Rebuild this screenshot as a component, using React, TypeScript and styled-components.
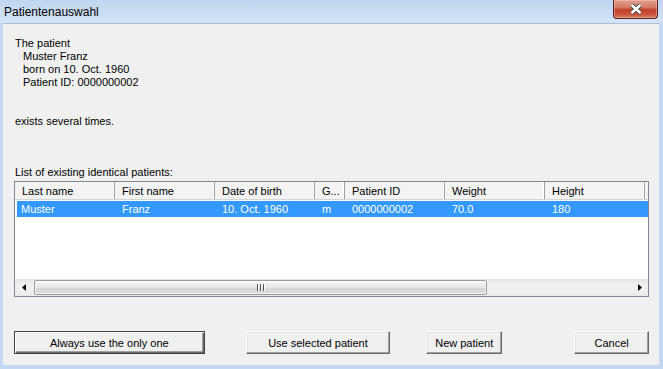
import styled, { createGlobalStyle } from "styled-components";

const GlobalStyle = createGlobalStyle`
  html, body {
    margin: 0;
    padding: 0;
  }
  body {
    background: #c4d9f1;
    font-family: "Liberation Sans", Arial, sans-serif;
    color: #000;
  }
`;

const Window = styled.div`
  width: 663px;
  height: 369px;
  display: flex;
  flex-direction: column;
  background: #c4d9f1;
  overflow: hidden;
`;

const TitleBar = styled.div`
  height: 23px;
  flex: none;
  display: flex;
  justify-content: space-between;
  align-items: flex-start;
  background: linear-gradient(to bottom, #c0d6f0, #d4e4f6);
`;

const Title = styled.span`
  font-size: 12px;
  line-height: 14px;
  padding: 5px 0 0 4px;
`;

const CloseButton = styled.div`
  width: 45px;
  height: 19px;
  margin-right: 5px;
  box-sizing: border-box;
  border: 1px solid #5b231e;
  border-top: none;
  border-radius: 0 0 4px 4px;
  background: linear-gradient(
    to bottom,
    #e1a091 0%,
    #d67a66 40%,
    #c2402b 55%,
    #cc5a44 85%,
    #d9806a 100%
  );
  box-shadow: inset 0 0 0 1px rgba(255, 200, 190, 0.45);
  display: flex;
  align-items: center;
  justify-content: center;
`;

const Client = styled.div`
  flex: 1;
  margin: 0 4px 4px 3px;
  box-sizing: border-box;
  background: #f0f0f0;
  border-top: 1px solid #aebfd6;
  padding: 13px 10px 0 11px;
  display: flex;
  flex-direction: column;
  font-size: 11px;
`;

const Line = styled.div<{ $indent?: boolean; $gap?: number }>`
  line-height: 13px;
  height: 13px;
  white-space: pre;
  padding-left: ${(p) => (p.$indent ? 9 : 1)}px;
  margin-top: ${(p) => p.$gap ?? 0}px;
`;

const ListBox = styled.div`
  margin-top: 2px;
  width: 635px;
  height: 116px;
  box-sizing: border-box;
  border: 1px solid #828790;
  background: #fff;
  display: flex;
  flex-direction: column;
  overflow: hidden;
`;

const HeaderRow = styled.div`
  display: flex;
  height: 18px;
  flex: none;
  background: #f3f3f3;
  border-bottom: 1px solid #d5d5d5;
  box-sizing: border-box;
`;

const HeaderCell = styled.div<{ $w: number }>`
  width: ${(p) => p.$w}px;
  flex: none;
  box-sizing: border-box;
  padding: 1px 0 0 7px;
  border-right: 1px solid #a0a0a0;
  box-shadow: inset -1px 0 0 #fff;
  line-height: 16px;
  white-space: nowrap;
  overflow: hidden;
`;

const DataRow = styled.div<{ $selected?: boolean }>`
  display: flex;
  height: 16px;
  flex: none;
  margin-left: 2px;
  margin-top: 1px;
  background: ${(p) => (p.$selected ? "#3399ff" : "transparent")};
  color: ${(p) => (p.$selected ? "#fff" : "#000")};
`;

const DataCell = styled.div<{ $w: number; $pad: number }>`
  width: ${(p) => p.$w}px;
  flex: none;
  box-sizing: border-box;
  padding-left: ${(p) => p.$pad}px;
  line-height: 16px;
  white-space: nowrap;
  overflow: hidden;
`;

const Filler = styled.div`
  flex: 1;
`;

const HScroll = styled.div`
  height: 17px;
  flex: none;
  display: flex;
  align-items: stretch;
  background: linear-gradient(to bottom, #e3e3e3, #f0f0f0 30%, #f0f0f0 70%, #e8e8e8);
`;

const ArrowButton = styled.div`
  width: 17px;
  flex: none;
  display: flex;
  align-items: center;
  justify-content: center;
`;

const Thumb = styled.div`
  margin: 1px 0 1px 2px;
  box-sizing: border-box;
  border: 1px solid #9a9a9a;
  border-radius: 2px;
  background: linear-gradient(to bottom, #f5f5f5, #e6e6e6 50%, #d5d5d5 51%, #dcdcdc);
  box-shadow: inset 0 0 0 1px rgba(255, 255, 255, 0.7);
  display: flex;
  align-items: center;
  justify-content: center;
  gap: 1px;
`;

const Grip = styled.span`
  width: 1px;
  height: 7px;
  background: #555;
  box-shadow: 1px 0 0 #fff;
  margin-right: 1px;
`;

const Track = styled.div`
  flex: 1;
`;

const ButtonRow = styled.div`
  display: flex;
  margin-top: 34px;
`;

const DialogButton = styled.div<{ $w: number; $ml: number; $default?: boolean }>`
  width: ${(p) => p.$w}px;
  margin-left: ${(p) => p.$ml}px;
  height: 23px;
  box-sizing: border-box;
  background: #f0f0f0;
  display: flex;
  align-items: center;
  justify-content: center;
  font-size: 11px;
  border: 1px solid;
  border-color: ${(p) => (p.$default ? "#404040" : "#ffffff #696969 #696969 #ffffff")};
  box-shadow: ${(p) =>
    p.$default
      ? "inset 1px 1px 0 #fff, inset -1px -1px 0 #696969, inset -2px -2px 0 #a0a0a0"
      : "inset -1px -1px 0 #a0a0a0, inset 1px 1px 0 #e3e3e3"};
`;

const columns = [
  { title: "Last name", w: 100 },
  { title: "First name", w: 100 },
  { title: "Date of birth", w: 100 },
  { title: "G...", w: 30 },
  { title: "Patient ID", w: 100 },
  { title: "Weight", w: 100 },
  { title: "Height", w: 100 },
];

const rows = [["Muster", "Franz", "10. Oct. 1960", "m", "0000000002", "70.0", "180"]];

function Triangle({ dir }: { dir: "left" | "right" }) {
  return (
    <svg width="4" height="7" viewBox="0 0 4 7">
      <path d={dir === "left" ? "M4 0 L0 3.5 L4 7 Z" : "M0 0 L4 3.5 L0 7 Z"} fill="#000" />
    </svg>
  );
}

export default function App() {
  return (
    <>
      <GlobalStyle />
      <Window>
        <TitleBar>
          <Title>Patientenauswahl</Title>
          <CloseButton>
            <svg width="14" height="12" viewBox="0 0 14 12">
              <path d="M2.5 2 L11.5 10 M11.5 2 L2.5 10" stroke="#4a4a4a" strokeWidth="4.4" />
              <path d="M2.5 2 L11.5 10 M11.5 2 L2.5 10" stroke="#fff" strokeWidth="2.4" />
            </svg>
          </CloseButton>
        </TitleBar>
        <Client>
          <Line>The patient</Line>
          <Line $indent>Muster Franz</Line>
          <Line $indent>born on 10. Oct. 1960</Line>
          <Line $indent>Patient ID: 0000000002</Line>
          <Line $gap={26}>exists several times.</Line>
          <Line $gap={38}>List of existing identical patients:</Line>
          <ListBox>
            <HeaderRow>
              {columns.map((c) => (
                <HeaderCell key={c.title} $w={c.w}>
                  {c.title}
                </HeaderCell>
              ))}
            </HeaderRow>
            {rows.map((r, i) => (
              <DataRow key={i} $selected={i === 0}>
                {r.map((v, j) => (
                  <DataCell key={j} $w={j === 0 ? 98 : columns[j].w} $pad={j === 0 ? 4 : 7}>
                    {v}
                  </DataCell>
                ))}
              </DataRow>
            ))}
            <Filler />
            <HScroll>
              <ArrowButton>
                <Triangle dir="left" />
              </ArrowButton>
              <Thumb style={{ width: 453 }}>
                <Grip />
                <Grip />
                <Grip />
              </Thumb>
              <Track />
              <ArrowButton>
                <Triangle dir="right" />
              </ArrowButton>
            </HScroll>
          </ListBox>
          <ButtonRow>
            <DialogButton $w={191} $ml={0} $default>
              Always use the only one
            </DialogButton>
            <DialogButton $w={145} $ml={41}>
              Use selected patient
            </DialogButton>
            <DialogButton $w={76} $ml={36}>
              New patient
            </DialogButton>
            <DialogButton $w={75} $ml={72}>
              Cancel
            </DialogButton>
          </ButtonRow>
        </Client>
      </Window>
    </>
  );
}
